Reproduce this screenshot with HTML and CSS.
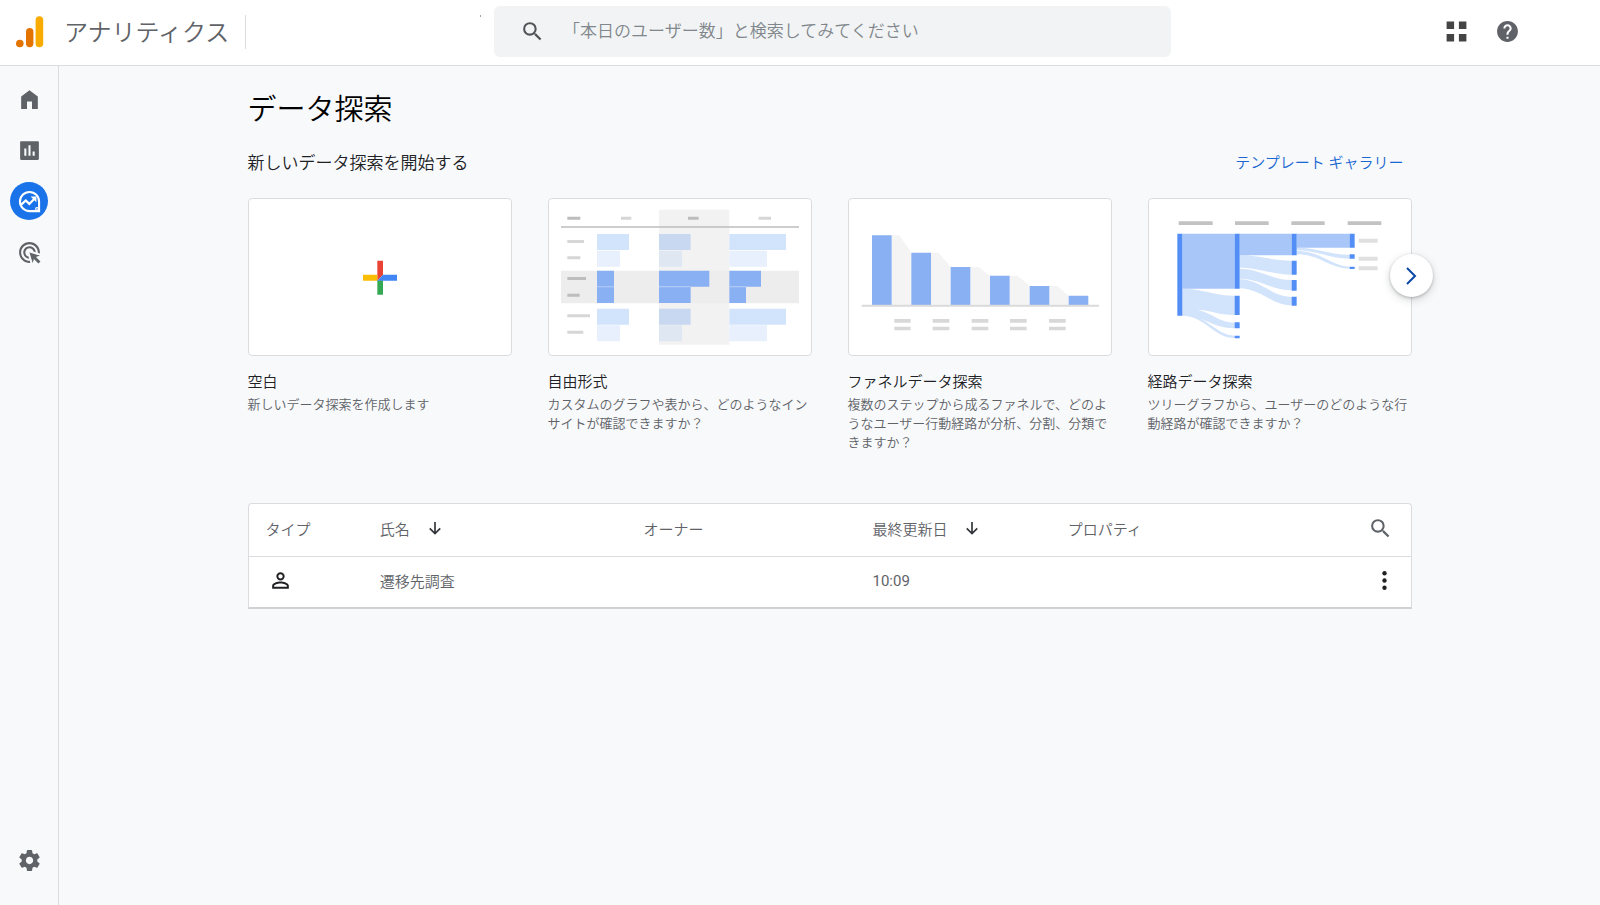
FILE: index.html
```html
<!DOCTYPE html>
<html lang="ja">
<head>
<meta charset="utf-8">
<meta name="viewport" content="width=device-width, initial-scale=1">
<title>アナリティクス</title>
<link rel="stylesheet" href="styles.css">
</head>
<body class="app">
<header class="topbar">
  <div class="brand">
    <svg class="brand-logo" viewBox="0 0 28 32" aria-hidden="true">
      <circle cx="3.8" cy="27.5" r="3.8" fill="#e37400"/>
      <rect x="10" y="12" width="7.4" height="19.3" rx="3.7" fill="#e37400"/>
      <rect x="19.6" y="0.3" width="7.6" height="31" rx="3.8" fill="#f9ab00"/>
    </svg>
    <span class="brand-name">アナリティクス</span>
    <span class="brand-divider"></span>
    <span class="brand-mark"></span>
  </div>
  <form class="search" role="search">
    <label class="search-label" for="q" aria-label="検索">
      <svg class="icon" viewBox="0 0 24 24"><path d="M15.5 14h-.79l-.28-.27A6.47 6.47 0 0 0 16 9.5 6.5 6.5 0 1 0 9.5 16c1.61 0 3.09-.59 4.23-1.57l.27.28v.79l5 4.99L20.49 19l-4.99-5zm-6 0C7.01 14 5 11.99 5 9.5S7.01 5 9.5 5 14 7.01 14 9.5 11.99 14 9.5 14z"/></svg>
    </label>
    <input class="search-input" id="q" type="text" placeholder="「本日のユーザー数」と検索してみてください">
  </form>
  <div class="actions">
    <button class="icon-button action-apps" type="button" aria-label="アプリ">
      <svg class="icon" viewBox="0 0 24 24"><path d="M2.5 2.5h7.2v7.2H2.5zM14.3 2.5h7.2v7.2h-7.2zM2.5 14.3h7.2v7.2H2.5zM14.3 14.3h7.2v7.2h-7.2z"/></svg>
    </button>
    <button class="icon-button" type="button" aria-label="ヘルプ">
      <svg class="icon" viewBox="0 0 24 24"><path d="M12 2C6.48 2 2 6.48 2 12s4.48 10 10 10 10-4.48 10-10S17.52 2 12 2zm1 17h-2v-2h2v2zm2.07-7.75l-.9.92C13.45 12.9 13 13.5 13 15h-2v-.5c0-1.1.45-2.1 1.17-2.83l1.24-1.26c.37-.36.59-.86.59-1.41 0-1.1-.9-2-2-2s-2 .9-2 2H8c0-2.21 1.79-4 4-4s4 1.79 4 4c0 .88-.36 1.68-.93 2.25z"/></svg>
    </button>
  </div>
</header>
<div class="body">
  <nav class="sidebar">
    <button class="nav-item" type="button" aria-label="ホーム">
      <svg class="icon" viewBox="0 0 24 24"><path d="M4 21V9l8-6 8 6v12h-5.600v-7H9.600v7z"/></svg>
    </button>
    <button class="nav-item" type="button" aria-label="レポート">
      <svg class="icon" viewBox="0 0 24 24"><path d="M20 3H4c-.6 0-1 .4-1 1v16c0 .6.4 1 1 1h16c.6 0 1-.4 1-1V4c0-.6-.4-1-1-1zM9 17H7v-7h2v7zm4 0h-2V7h2v10zm4 0h-2v-4h2v4z"/></svg>
    </button>
    <button class="nav-item nav-item-active" type="button" aria-label="探索">
      <svg class="icon" viewBox="0 0 24 24"><path d="M21.200 12a9.200 9.200 0 1 0-9.200 9.200h9.200z" fill="none" stroke="currentColor" stroke-width="2"/><path d="M3.800 15.200l4.600-4.200 3.400 3.300 4.900-5" fill="none" stroke="currentColor" stroke-width="2.100"/><path d="M13 7.200h5.600v5.600z"/><circle cx="19.200" cy="19.200" r="1.900"/><circle cx="19.200" cy="19.200" r=".8" fill="#1a73e8"/></svg>
    </button>
    <button class="nav-item" type="button" aria-label="広告">
      <svg class="icon" viewBox="0 0 24 24"><path d="M11.71 17.99C8.53 17.84 6 15.22 6 12c0-3.31 2.69-6 6-6 3.22 0 5.84 2.53 5.99 5.71l-2.1-.63C15.48 9.31 13.89 8 12 8c-2.21 0-4 1.790-4 4 0 1.890 1.310 3.480 3.080 3.890l.63 2.100zM22 12c0 .3-.01.6-.04.9l-1.970-.59c.01-.1.01-.21.01-.31 0-4.420-3.580-8-8-8s-8 3.580-8 8 3.580 8 8 8c.1 0 .21 0 .31-.01l.59 1.970c-.3.03-.6.04-.9.04-5.520 0-10-4.480-10-10S6.480 2 12 2s10 4.480 10 10zm-3.770 4.260L22 15l-10-3 3 10 1.260-3.770 4.270 4.270 1.980-1.980-4.280-4.260z"/></svg>
    </button>
    <button class="nav-item nav-item-last" type="button" aria-label="管理">
      <svg class="icon" viewBox="0 0 24 24"><path d="M19.430 12.980c.04-.32.07-.64.07-.98s-.03-.66-.07-.98l2.110-1.650c.19-.15.24-.42.12-.64l-2-3.460c-.12-.22-.39-.3-.61-.22l-2.490 1c-.52-.4-1.080-.73-1.690-.98l-.38-2.650C14.460 2.180 14.250 2 14 2h-4c-.25 0-.46.18-.49.42l-.38 2.650c-.61.25-1.170.59-1.690.98l-2.490-1c-.23-.09-.49 0-.61.22l-2 3.460c-.13.22-.07.49.12.64l2.110 1.650c-.04.32-.07.65-.07.98s.03.66.07.98l-2.110 1.650c-.19.15-.24.42-.12.64l2 3.460c.12.22.39.3.61.22l2.490-1c.52.4 1.080.73 1.690.98l.38 2.650c.03.24.24.42.49.42h4c.25 0 .46-.18.49-.42l.38-2.650c.61-.25 1.170-.59 1.690-.98l2.490 1c.23.09.49 0 .61-.22l2-3.460c.12-.22.07-.49-.12-.64l-2.110-1.650zM12 15.500c-1.930 0-3.500-1.570-3.500-3.500s1.570-3.500 3.500-3.500 3.500 1.570 3.500 3.500-1.570 3.500-3.500 3.500z"/></svg>
    </button>
  </nav>
  <main class="content">
    <h1 class="page-title">データ探索</h1>
    <div class="section-head">
      <h2 class="section-title">新しいデータ探索を開始する</h2>
      <a class="gallery-link" href="#gallery">テンプレート ギャラリー</a>
    </div>
    <div class="templates">
      <button class="card" type="button">
        <span class="card-preview">
          <svg class="card-art" viewBox="27 58 786 468" aria-hidden="true">
            <path d="M412 243h17v42l-17 18z" fill="#ea4335"/>
            <path d="M369 285h43v18h-43z" fill="#fbbc04"/>
            <path d="M412 302h17v43h-17z" fill="#34a853"/>
            <path d="M429 285h42v18h-59z" fill="#4285f4"/>
          </svg>
        </span>
        <span class="card-name">空白</span>
        <span class="card-text">新しいデータ探索を作成します</span>
      </button>
      <button class="card" type="button">
        <span class="card-preview">
          <svg class="card-art" viewBox="27 28 786 468" aria-hidden="true">
            <path d="M357 60h211v405H357z" fill="#f2f2f2"/>
            <path d="M63 243h714v98H63z" fill="#ededed"/>
            <path d="M63 110h714v4H63z" fill="#bdbdbd"/>
            <path d="M82 81h39v9H82zM444 81h32v9h-32zM82 262h56v9H82zM82 312h37v9H82z" fill="#bdbdbd"/>
            <path d="M243 81h31v9h-31zM656 81h37v9h-37zM82 151h50v9H82zM82 200h39v9H82zM82 374h68v9H82zM82 423h48v9H82z" fill="#d6d6d6"/>
            <path d="M171 133h96v48h-96zM568 133h170v48H568zM171 357h96v48h-96zM568 357h170v48H568z" fill="#d2e3fc"/>
            <path d="M171 183h69v48h-69zM568 183h113v48H568zM171 407h69v48h-69zM568 407h113v48H568z" fill="#e8f0fe"/>
            <path d="M357 133h95v48h-95zM357 357h95v48h-95z" fill="#c7d8f0"/>
            <path d="M357 183h69v48h-69zM357 407h69v48h-69z" fill="#dfe7f3"/>
            <path d="M171 243h51v97h-51zM357 243h151v48H357zM357 292h95v48h-95zM568 243h95v48h-95zM568 292h50v48h-50z" fill="#8ab0f4"/>
            <path d="M171 290h51v3h-51zM357 290h95v3h-95zM568 290h50v3h-50z" fill="#b4cbf5"/>
          </svg>
        </span>
        <span class="card-name">自由形式</span>
        <span class="card-text">カスタムのグラフや表から、どのようなインサイトが確認できますか？</span>
      </button>
      <button class="card" type="button">
        <span class="card-preview">
          <svg class="card-art" viewBox="25 28 786 468" aria-hidden="true">
            <path d="M153 137h23l36 52v156h-59zM271 189h23l36 43v113h-59zM389 232h25l34 26v87h-59zM507 258h24l36 31v56h-60zM626 289h24l34 29v27h-58z" fill="#f4f4f4"/>
            <path d="M94 137h59v209H94zM212 189h59v157h-59zM330 232h59v114h-59zM448 258h59v88h-59zM567 289h59v57h-59zM684 318h59v28h-59z" fill="#8ab0f4"/>
            <path d="M63 345h712v6H63z" fill="#dadada"/>
            <path d="M161 388h49v11h-49zM276 388h50v11h-50zM393 388h50v11h-50zM508 388h50v11h-50zM625 388h50v11h-50zM161 411h49v11h-49zM276 411h50v11h-50zM393 411h50v11h-50zM508 411h50v11h-50zM625 411h50v11h-50z" fill="#d8d8d8"/>
          </svg>
        </span>
        <span class="card-name">ファネルデータ探索</span>
        <span class="card-text">複数のステップから成るファネルで、どのようなユーザー行動経路が分析、分割、分類できますか？</span>
      </button>
      <button class="card" type="button">
        <span class="card-preview">
          <svg class="card-art" viewBox="25 28 786 468" aria-hidden="true">
            <path d="M114 95h102v11H114zM283 95h101v11H283zM452 95h100v11H452zM621 95h101v11H621z" fill="#c2c2c2"/>
            <path d="M654 147h57v12h-57zM654 201h57v12h-57zM654 230h57v12h-57z" fill="#e0e0e0"/>
            <path d="M125 297c60 0 95 21 157 21v58c-50 0-75-15-110-16 45 12 65 39 110 39v17c-70 0-90-38-157-39z" fill="#d2e3fc"/>
            <path d="M125 374c75 0 100 64 157 64v7c-62 0-90-67-157-67z" fill="#d2e3fc"/>
            <path d="M297 197c60 0 95 16 156 16v42c-60 0-95-21-156-21zM297 237c60 0 95 34 156 34v31c-60 0-95-35-156-35zM297 269c60 0 95 52 156 52v26c-60 0-95-51-156-51z" fill="#d2e3fc"/>
            <path d="M468 174c60 0 100 21 159 21v12c-59 0-99-25-159-25zM468 184c75 0 105 47 159 47v6c-60 0-90-43-159-43z" fill="#d2e3fc"/>
            <path d="M125 132h157v165H125zM297 132h156v65H297zM468 132h159v42H468z" fill="#a9c6f9"/>
            <path d="M110 132h15v246h-15zM282 132h15v165h-15zM282 318h15v58h-15zM282 398h15v18h-15zM282 438h15v8h-15zM453 132h15v65h-15zM453 213h15v42h-15zM453 271h15v32h-15zM453 321h15v27h-15zM627 132h15v42h-15zM627 194h15v13h-15zM627 231h15v7h-15z" fill="#528ef5"/>
          </svg>
        </span>
        <span class="card-name">経路データ探索</span>
        <span class="card-text">ツリーグラフから、ユーザーのどのような行動経路が確認できますか？</span>
      </button>
      <button class="next" type="button" aria-label="次へ">
        <svg class="next-icon" viewBox="0 0 24 24"><path d="M8 4l8 8-8 8" fill="none" stroke="currentColor" stroke-width="2"/></svg>
      </button>
    </div>
    <div class="table-panel">
      <table class="table">
        <colgroup><col class="col-type"><col class="col-name"><col class="col-owner"><col class="col-date"><col></colgroup>
        <thead>
          <tr>
            <th class="cell cell-type" scope="col">タイプ</th>
            <th class="cell" scope="col"><span class="sort">氏名 <svg class="sort-icon" viewBox="0 0 24 24"><path d="M12 4v15M5 12.500l7 7 7-7" fill="none" stroke="currentColor" stroke-width="2.200"/></svg></span></th>
            <th class="cell" scope="col">オーナー</th>
            <th class="cell" scope="col"><span class="sort">最終更新日 <svg class="sort-icon" viewBox="0 0 24 24"><path d="M12 4v15M5 12.500l7 7 7-7" fill="none" stroke="currentColor" stroke-width="2.200"/></svg></span></th>
            <th class="cell" scope="col"><span class="split">プロパティ
              <button class="icon-button table-search" type="button" aria-label="表を検索"><svg class="icon" viewBox="0 0 24 24"><path d="M15.500 14h-.79l-.28-.27A6.470 6.470 0 0 0 16 9.500 6.500 6.500 0 1 0 9.500 16c1.610 0 3.090-.59 4.230-1.570l.27.28v.79l5 4.990L20.490 19l-4.990-5zm-6 0C7.010 14 5 11.990 5 9.500S7.010 5 9.500 5 14 7.010 14 9.500 11.990 14 9.500 14z"/></svg></button></span></th>
          </tr>
        </thead>
        <tbody>
          <tr>
            <td class="cell cell-type"><svg class="icon person" viewBox="0 0 24 24" role="img" aria-label="個人"><path d="M12 5.900a2.100 2.100 0 1 1 0 4.200 2.100 2.100 0 0 1 0-4.200m0 9c2.970 0 6.100 1.460 6.100 2.100v1.100H5.900V17c0-.64 3.130-2.100 6.100-2.100M12 4a4 4 0 1 0 0 8 4 4 0 0 0 0-8zm0 9c-2.670 0-8 1.340-8 4v3h16v-3c0-2.660-5.330-4-8-4z"/></svg></td>
            <td class="cell">遷移先調査</td>
            <td class="cell"></td>
            <td class="cell cell-time">10:09</td>
            <td class="cell"><span class="split split-end">
              <button class="icon-button row-menu" type="button" aria-label="メニュー"><svg class="icon" viewBox="0 0 24 24"><circle cx="12" cy="5" r="2.100"/><circle cx="12" cy="12" r="2.100"/><circle cx="12" cy="19" r="2.100"/></svg></button></span></td>
          </tr>
        </tbody>
      </table>
    </div>
  </main>
</div>
</body>
</html>
```
FILE: styles.css
```css
*,
*::before,
*::after {
  box-sizing: border-box;
}

.app {
  display: flex;
  flex-direction: column;
  min-height: 100vh;
  margin: 0;
  background: #f8f9fb;
  color: #202124;
  font-family: Roboto, "Noto Sans CJK JP", sans-serif;
  font-size: 15px;
  font-weight: 350;
}

button {
  margin: 0;
  padding: 0;
  border: 0;
  background: none;
  color: inherit;
  font: inherit;
  cursor: pointer;
}

.icon {
  display: block;
  width: 25px;
  height: 25px;
  fill: currentColor;
}

.icon-button {
  display: flex;
  color: #5f6368;
}

/* Top bar */

.topbar {
  display: grid;
  grid-template-columns: minmax(0, 494fr) minmax(0, 677fr) minmax(0, 429fr);
  align-items: center;
  height: 66px;
  padding-bottom: 3px;
  border-bottom: 1px solid #dadce0;
  background: #fff;
}

.brand {
  display: flex;
  align-items: center;
  padding: 2px 13px 0 16px;
}

.brand-logo {
  width: 28px;
  height: 32px;
}

.brand-name {
  margin-left: 20px;
  padding-top: 2px;
  color: #5f6368;
  font-size: 24px;
  line-height: 32px;
  white-space: nowrap;
}

.brand-divider {
  width: 1px;
  height: 34px;
  margin-left: 16px;
  background: #dadce0;
}

.brand-mark {
  align-self: flex-start;
  width: 1px;
  height: 2px;
  margin-left: auto;
  background: #9aa0a6;
}

.search {
  display: flex;
  align-items: center;
  height: 51px;
  padding: 0 26px;
  border-radius: 6px;
  background: #f1f3f4;
}

.search-label {
  color: #505458;
}

.search-input {
  flex: 1;
  min-width: 0;
  margin-left: 18px;
  padding: 0;
  border: 0;
  outline: 0;
  background: none;
  color: #5f6368;
  font: inherit;
  font-size: 17px;
}

.search-input::placeholder {
  color: #80868b;
  opacity: 1;
}

.actions {
  display: flex;
  justify-content: flex-end;
  gap: 26px;
  padding-right: 80px;
}

.action-apps {
  color: #444;
}

/* Sidebar */

.body {
  display: flex;
  flex: 1;
}

.sidebar {
  display: flex;
  flex: none;
  flex-direction: column;
  align-items: center;
  gap: 13px;
  width: 59px;
  padding: 14px 0 26px;
  border-right: 1px solid #dadce0;
}

.nav-item {
  display: flex;
  align-items: center;
  justify-content: center;
  width: 38px;
  height: 38px;
  border-radius: 50%;
  color: #5f6368;
}

.nav-item-active {
  background: #1a73e8;
  color: #fff;
}

.nav-item-last {
  margin-top: auto;
}

/* Content */

.content {
  flex: 1;
  max-width: 1164px;
  margin: 0 auto;
  padding: 24px 0;
}

.page-title {
  margin: 0;
  color: #000;
  font-size: 29px;
  font-weight: 350;
  line-height: 40px;
}

.section-head {
  display: flex;
  align-items: center;
  justify-content: space-between;
  margin-top: 21px;
  padding-right: 8px;
  line-height: 24px;
}

.section-title {
  margin: 0;
  font-size: 17px;
  font-weight: 350;
}

.gallery-link {
  color: #1967d2;
  text-decoration: none;
}

.templates {
  position: relative;
  display: grid;
  grid-template-columns: repeat(4, minmax(0, 1fr));
  gap: 36px;
  align-items: start;
  margin-top: 23px;
}

.card {
  display: flex;
  flex-direction: column;
  text-align: left;
}

.card-preview {
  width: 100%;
  overflow: hidden;
  border: 1px solid #dadce0;
  border-radius: 4px;
  background: #fff;
}

.card-art {
  display: block;
  width: 100%;
}

.card-name {
  margin-top: 16px;
  line-height: 20px;
}

.card-text {
  margin-top: 3px;
  color: #5f6368;
  font-size: 13px;
  line-height: 19px;
}

.next {
  position: absolute;
  top: 56px;
  right: -21px;
  display: flex;
  align-items: center;
  justify-content: center;
  width: 43px;
  height: 43px;
  border-radius: 50%;
  background: #fff;
  box-shadow: 0 1px 3px rgba(60, 64, 67, 0.3), 0 3px 8px rgba(60, 64, 67, 0.2);
  color: #0b47a8;
}

.next-icon {
  width: 24px;
  height: 24px;
}

/* Table */

.table-panel {
  margin-top: 51px;
  border: 1px solid #dadce0;
  border-bottom: 2px solid #cfd1d4;
  border-radius: 4px 4px 0 0;
  background: #fff;
}

.table {
  width: 100%;
  border-collapse: collapse;
  table-layout: fixed;
  color: #5f6368;
}

.col-type {
  width: 11.3%;
}

.col-name {
  width: 22.7%;
}

.col-owner {
  width: 19.7%;
}

.col-date {
  width: 16.8%;
}

.cell {
  height: 51px;
  padding: 0 0 2px;
  font-weight: 350;
  text-align: left;
  vertical-align: middle;
}

th.cell {
  height: 52px;
  padding-bottom: 3px;
  border-bottom: 1px solid #dadce0;
}

.cell-type {
  padding-left: 17px;
}

.cell-time {
  font-weight: 400;
}

.sort {
  display: flex;
  align-items: center;
  gap: 16px;
}

.sort-icon {
  width: 18px;
  height: 18px;
  color: #303438;
}

.split {
  display: flex;
  align-items: center;
  justify-content: space-between;
}

.split-end {
  justify-content: flex-end;
}

.table-search {
  margin-right: 18px;
}

.row-menu {
  margin-right: 14px;
  color: #202124;
}

.person {
  margin-left: 2px;
  color: #202124;
}
```
